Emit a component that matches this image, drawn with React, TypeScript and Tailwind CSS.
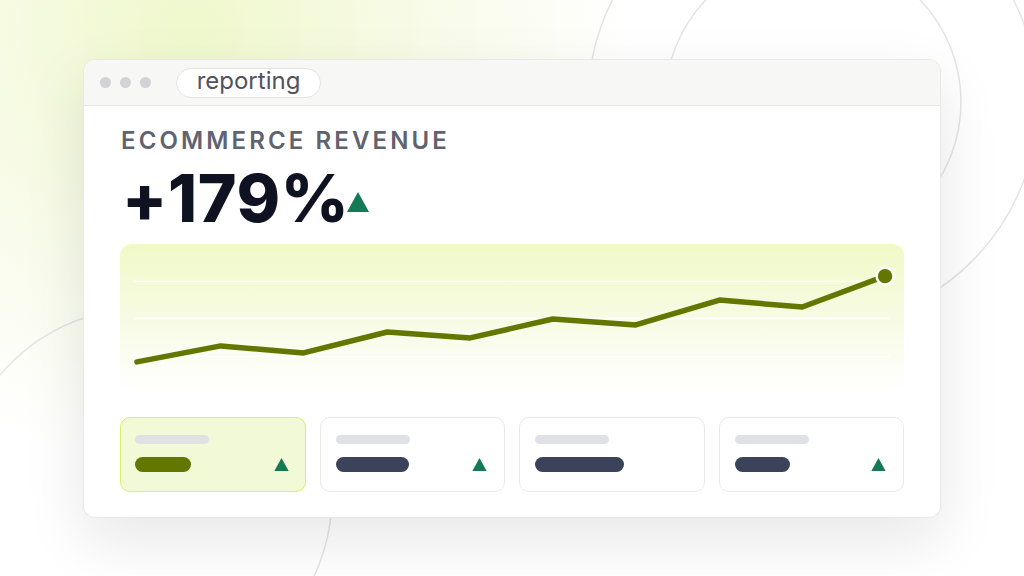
import React from 'react'

const points: [number, number][] = [
  [17, 118],
  [101, 102],
  [184, 109],
  [268, 88],
  [351, 94],
  [434, 75],
  [517, 81],
  [601, 56],
  [684, 63],
  [767, 32],
]

function Up({ className }: { className?: string }) {
  return (
    <svg viewBox="0 0 22 20" className={className}>
      <path d="M11 0 L22 20 L0 20 Z" fill="#137a55" />
    </svg>
  )
}

// Decorative backdrop: lime glow top-left and the thin concentric rings.
function Backdrop() {
  return (
    <svg className="absolute inset-0" width="1024" height="576" viewBox="0 0 1024 576">
      <defs>
        <radialGradient id="glow" cx="190" cy="30" r="440" gradientUnits="userSpaceOnUse">
          <stop offset="0" stopColor="#f0f8cc" />
          <stop offset="0.5" stopColor="#f7fbe6" />
          <stop offset="1" stopColor="#ffffff" />
        </radialGradient>
      </defs>
      <rect width="1024" height="576" fill="url(#glow)" />
      <g fill="none" stroke="#e4e4e2" strokeWidth="1.5">
        <circle cx="813" cy="102" r="148" />
        <circle cx="813" cy="102" r="225" />
        <circle cx="144" cy="496" r="188" />
      </g>
    </svg>
  )
}

function Chart() {
  const d = points.map(([x, y], i) => `${i ? 'L' : 'M'}${x} ${y}`).join(' ')
  const [ex, ey] = points[points.length - 1]
  return (
    <div className="h-[148px] rounded-t-[12px] bg-gradient-to-b from-[#f1f9c7] via-[#f7fbe3] to-white">
      <svg viewBox="0 0 786 148" className="w-full h-full">
        <g stroke="#ffffff" strokeWidth="1.5">
          <line x1="14" x2="772" y1="37.5" y2="37.5" />
          <line x1="14" x2="772" y1="74.5" y2="74.5" />
          <line x1="14" x2="772" y1="112.5" y2="112.5" />
        </g>
        <path d={d} fill="none" stroke="#637600" strokeWidth="5.5" strokeLinecap="round" strokeLinejoin="round" />
        <circle cx={ex} cy={ey} r="8.5" fill="#637600" stroke="#ffffff" strokeWidth="2.5" />
      </svg>
    </div>
  )
}

function StatCard({
  barWidth,
  active,
  showUp,
}: {
  barWidth: string
  active?: boolean
  showUp?: boolean
}) {
  return (
    <div
      className={
        active
          ? 'h-[75px] rounded-[10px] border-[1.5px] border-[#d9f06a] bg-[#f2f9d7] px-[14px] pt-[17px]'
          : 'h-[75px] rounded-[10px] border border-[#e9e9e6] bg-white px-[15px] pt-[17px]'
      }
    >
      <div className="h-[9px] w-[74px] rounded-full bg-[#e0e1e5]" />
      <div className="mt-[13px] flex items-center justify-between pr-[2px]">
        <div
          className={`h-[15px] rounded-full ${barWidth} ${active ? 'bg-[#637600]' : 'bg-[#3b435a]'}`}
        />
        {showUp && <Up className="w-[15px] h-[13px]" />}
      </div>
    </div>
  )
}

export default function App() {
  return (
    <div className="relative w-[1024px] h-[576px] overflow-hidden bg-white font-['Inter',sans-serif]">
      <Backdrop />
      <div className="relative pt-[59px] pl-[83px]">
        <div className="w-[858px] h-[459px] rounded-[12px] border border-[#e8e8e5] bg-white overflow-hidden shadow-[0_22px_60px_rgba(20,24,40,0.1)]">
          <div className="h-[46px] flex items-center border-b border-[#e7e7e4] bg-[#f7f7f5] pl-[16px]">
            <div className="flex gap-[9px]">
              <span className="w-[11px] h-[11px] rounded-full bg-[#d2d2d7]" />
              <span className="w-[11px] h-[11px] rounded-full bg-[#d2d2d7]" />
              <span className="w-[11px] h-[11px] rounded-full bg-[#d2d2d7]" />
            </div>
            <div className="ml-[25px] h-[30px] w-[145px] flex items-center justify-center rounded-full border border-[#e3e3e0] bg-white text-[24px] leading-none text-[#50535d] pb-[3px]">
              reporting
            </div>
          </div>
          <div className="px-[36px] pt-[23px]">
            <div className="pl-[1px] text-[24px] leading-none font-semibold tracking-[0.13em] text-[#5f6370]">
              ECOMMERCE REVENUE
            </div>
            <div className="mt-[12px] flex items-start">
              <span className="pl-[2px] text-[66px] leading-none font-extrabold tracking-[0.01em] text-[#0f1220]">
                +179%
              </span>
              <Up className="mt-[27px] -ml-[2px] w-[22px] h-[20px]" />
            </div>
            <div className="mt-[13px]">
              <Chart />
            </div>
            <div className="mt-[25px] grid grid-cols-4 gap-[14px]">
              <StatCard active barWidth="w-[56px]" showUp />
              <StatCard barWidth="w-[73px]" showUp />
              <StatCard barWidth="w-[89px]" />
              <StatCard barWidth="w-[55px]" showUp />
            </div>
          </div>
        </div>
      </div>
    </div>
  )
}
